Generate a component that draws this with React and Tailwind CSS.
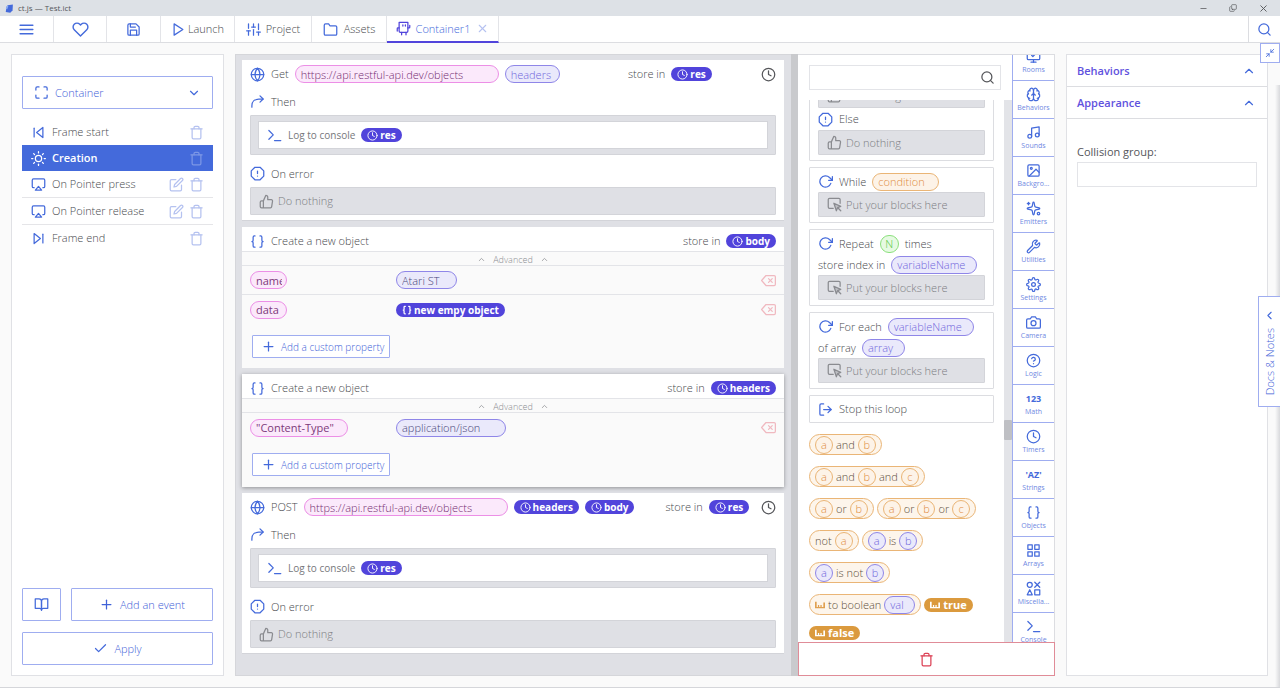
import React from "react";
import {
  FiMenu, FiHeart, FiSave, FiPlay, FiSliders, FiFolder, FiX, FiSearch, FiMaximize, FiChevronDown,
  FiChevronUp, FiChevronLeft, FiSkipBack, FiSkipForward, FiSun, FiAirplay, FiEdit, FiTrash, FiBookOpen,
  FiPlus, FiCheck, FiGlobe, FiClock, FiAlertOctagon, FiThumbsUp, FiDelete, FiRotateCw,
  FiLogOut, FiMusic, FiImage, FiSettings, FiCamera, FiHelpCircle, FiGrid, FiMinimize2, FiMinus,
} from "react-icons/fi";
import { Brain, Sparkles, Wrench, MonitorCheck, Braces, Copy } from "lucide-react";

const BLUE = "text-[#446adb]";

function Svg({ className, children, stroke = 2 }) {
  return (
    <svg viewBox="0 0 24 24" className={className} fill="none" stroke="currentColor" strokeWidth={stroke} strokeLinecap="round" strokeLinejoin="round" aria-hidden="true">
      {children}
    </svg>
  );
}

const ThenIcon = ({ className }) => (
  <Svg className={className}>
    <path d="M3 21v-2C3 12 8 8 14 8h7" />
    <path d="M16 3l5 5-5 5" />
  </Svg>
);

const PromptIcon = ({ className }) => (
  <Svg className={className}>
    <path d="M3 18l7-7-7-7" />
    <path d="M12 20h10" />
  </Svg>
);

const DroidIcon = ({ className }) => (
  <Svg className={className}>
    <path d="M5 2h14v14a2 2 0 0 1-2 2H7a2 2 0 0 1-2-2z" />
    <path d="M11 6v2M15 6v2M9 18v4M16 18v4M5 11H3a1 1 0 0 0-1 1v4M19 11h2a1 1 0 0 0 1-1V7" />
  </Svg>
);

const DropIcon = ({ className }) => (
  <Svg className={className}>
    <path d="M10 18H4a2 2 0 0 1-2-2V4a2 2 0 0 1 2-2h15a2 2 0 0 1 2 2v6" />
    <path d="M11 10l4 12 2-5 5-2z" fill="currentColor" fillOpacity="0.4" />
    <path d="M18 18l4 4" />
  </Svg>
);

const BoolIcon = ({ className }) => (
  <svg viewBox="0 0 24 24" className={className} fill="currentColor" aria-hidden="true">
    <path d="M0 4h4v16H0zM4 17h20v3H4zM7 12h3v6H7zM13 12h3v6h-3zM20 6h4v14h-4z" />
  </svg>
);

const ShapesIcon = ({ className }) => (
  <Svg className={className}>
    <circle cx="6" cy="6" r="4" />
    <path d="M14 2l8 8M22 2l-8 8M6 14l-4 8h8zM14 14h8v8h-8z" />
  </Svg>
);

function EventRow({ icon, label, selected, edit, line }) {
  return (
    <li
      className={
        "flex items-center px-[9px] " +
        (selected ? "h-[26px] bg-[#446adb] font-semibold text-white" : line ? "h-[27px] border-b border-[#e5e5e8]" : "h-[26px]")
      }
    >
      <span className={selected ? "text-white" : BLUE}>{icon}</span>
      <span className="ml-[6px] grow">{label}</span>
      {edit && (
        <button aria-label={"Edit " + label} className="mr-[5px] text-[#b5c2f0]"><FiEdit className="size-[15px]" /></button>
      )}
      <button aria-label={"Delete " + label} className={selected ? "text-[#7c97e6]" : "text-[#b5c2f0]"}>
        <FiTrash className="size-[15px]" />
      </button>
    </li>
  );
}

function Var({ children, braces }) {
  return (
    <span className="flex h-[14px] shrink-0 items-center gap-[2px] rounded-full bg-[#5144db] px-[6px] text-[10px] font-bold whitespace-nowrap text-white">
      {braces ? <Braces className="size-[10px]" strokeWidth={3} /> : <FiClock className="size-[11px]" />}
      {children}
    </span>
  );
}

const tones = {
  pink: "border-[#ec8fe6] bg-[#fbe9fb] text-[#742c70]",
  pinkBold: "border-[#ec8fe6] bg-[#fbe9fb] text-[#7d3a7a] font-medium",
  violet: "border-[#8f86e8] bg-[#eae9fb] text-[#48457a]",
  violetHint: "border-[#8f86e8] bg-[#eae9fb] text-[#7167dc]",
  orange: "border-[#eab576] bg-[#fdf3e8] text-[#e08c40]",
  green: "border-[#8be07c] bg-[#e6fae2] text-[#55c844]",
};

function Field({ tone, value, width, label, center }) {
  return (
    <input
      aria-label={label || value}
      defaultValue={value}
      className={"h-[18px] shrink-0 rounded-full border text-[11px] outline-none " + (center ? "text-center px-0 " : "pl-[5px] pr-1 ") + tones[tone] + " " + width}
    />
  );
}

function Nothing({ height = "h-[28px]" }) {
  return (
    <div className={"flex items-center gap-1 rounded-[1px] border border-[#d3d4d9] bg-[#dfe0e5] px-2 text-[#7c7d82] " + height}>
      <FiThumbsUp className="size-[15px] text-[#8a8b90]" />
      <span>Do nothing</span>
    </div>
  );
}

function RequestBlock({ verb, urlWidth, children }) {
  return (
    <section className="border-b border-[#d3d4d9] bg-white px-2 pb-[5px]">
      <div className="flex h-[28px] items-center gap-[6px]">
        <FiGlobe className={"size-[15px] shrink-0 " + BLUE} />
        <span className="shrink-0">{verb}</span>
        <Field tone="pink" label="Request URL" value="https://api.restful-api.dev/objects" width={urlWidth} />
        {children}
        <span className="ml-[19px] grow" />
        <span className="shrink-0 whitespace-nowrap">store in</span>
        <Var>res</Var>
        <span className="grow" />
        <FiClock className="size-[15px] shrink-0 text-[#55565a]" />
      </div>
      <div className="flex h-[27px] items-center gap-[6px]">
        <ThenIcon className={"size-[15px] " + BLUE} />
        <span>Then</span>
      </div>
      <div className="h-[40px] rounded-[1px] border border-[#d3d4d9] bg-[#dfe0e5] px-[7px] py-[5px]">
        <div className="flex h-[28px] items-center gap-[6px] border border-[#d3d4d9] bg-white px-2">
          <PromptIcon className={"size-[15px] " + BLUE} />
          <span className="text-[10px] font-normal text-[#77787c]">Log to console</span>
          <Var>res</Var>
        </div>
      </div>
      <div className="mt-[5px] flex h-[27px] items-center gap-[6px]">
        <FiAlertOctagon className={"size-[15px] " + BLUE} />
        <span>On error</span>
      </div>
      <Nothing />
    </section>
  );
}

function PropRow({ name, nameWidth, children, line }) {
  return (
    <div className={"flex h-[29px] items-center px-2 " + (line ? "border-b border-[#e3e4e8]" : "")}>
      <div className="flex w-[146px]"><Field tone="pinkBold" label="Property name" value={name} width={nameWidth} /></div>
      <div className="flex grow">{children}</div>
      <button aria-label={"Remove " + name} className="text-[#f0b9c0]"><FiDelete className="size-[15px]" /></button>
    </div>
  );
}

function ObjectBlock({ target, raised, children }) {
  return (
    <section className={"bg-[#fafafa] " + (raised ? "z-10 pb-[11px] shadow-[0_1px_4px_rgba(0,0,0,0.35)]" : "pb-[10px]")}>
      <div className="flex h-[25px] items-center gap-[6px] border-b border-[#e3e4e8] bg-white px-2 pt-1">
        <Braces className={"size-[15px] " + BLUE} />
        <span className="grow">Create a new object</span>
        <span>store in</span>
        <Var>{target}</Var>
      </div>
      <button className="flex h-[14px] w-full items-center justify-center gap-[7px] border-b border-[#e3e4e8] pt-[2px] text-[9px] text-[#8c8d92]">
        <FiChevronUp className="size-[9px]" />
        <span>Advanced</span>
        <FiChevronUp className="size-[9px]" />
      </button>
      {children}
      <button className="mt-[11px] ml-[10px] flex h-[23px] items-center gap-[5px] rounded-[1px] border border-[#9fadf0] bg-white pr-[5px] pl-2 text-[10px] text-[#3f62d8]">
        <FiPlus className={"size-[15px] " + BLUE} />
        Add a custom property
      </button>
    </section>
  );
}

function Drop() {
  return (
    <div className="flex h-[25px] items-center gap-1 rounded-[1px] border border-[#d3d4d9] bg-[#dfe0e5] px-2 text-[#7c7d82]">
      <DropIcon className="size-[15px] text-[#8a8b90]" />
      <span>Put your blocks here</span>
    </div>
  );
}

function Card({ children, className = "" }) {
  return <div className={"mb-[6px] shrink-0 rounded-[1px] border border-[#dcdde1] bg-white px-2 pt-[3px] pb-[5px] " + className}>{children}</div>;
}

function Line({ children }) {
  return <div className="flex h-[21px] items-center gap-[6px] whitespace-nowrap">{children}</div>;
}

function Expr({ children }) {
  return (
    <span className="flex h-[21px] items-center gap-[3px] rounded-full border border-[#eab576] bg-[#fdf5eb] px-[5px] whitespace-nowrap text-[#5d4f40]">
      {children}
    </span>
  );
}

function Slot({ tone = "orange", children, width = "w-[18px]" }) {
  return <Field tone={tone} value={children} width={width} center={width === "w-[18px]"} label={"Operand " + children} />;
}

function BoolPill({ children }) {
  return (
    <span className="flex h-[14px] items-center gap-[3px] rounded-full bg-[#db9a3e] px-[6px] font-bold text-white">
      <BoolIcon className="size-[10px]" />
      {children}
    </span>
  );
}

const Row = ({ children, short }) => <div className={"mt-[11px] flex shrink-0 items-center gap-[3px] " + (short ? "h-[14px]" : "h-[21px]")}>{children}</div>;

const I = "size-[15px]";
const categories = [
  ["Rooms", <MonitorCheck className={I} />],
  ["Behaviors", <Brain className={I} />],
  ["Sounds", <FiMusic className={I} />],
  ["Backgro...", <FiImage className={I} />],
  ["Emitters", <Sparkles className={I + " -scale-x-100"} />],
  ["Utilities", <Wrench className={I} />],
  ["Settings", <FiSettings className={I} />],
  ["Camera", <FiCamera className={I} />],
  ["Logic", <FiHelpCircle className={I} />],
  ["Math", <span className="flex h-[15px] items-center text-[9px] font-bold">123</span>],
  ["Timers", <FiClock className={I} />],
  ["Strings", <span className="flex h-[15px] items-center text-[9px] font-bold">'AZ'</span>],
  ["Objects", <Braces className={I} />],
  ["Arrays", <FiGrid className={I} />],
  ["Miscella...", <ShapesIcon className={I} />],
  ["Console", <PromptIcon className={I} />],
];

const outline = "flex items-center justify-center rounded-[1px] border border-[#9fadf0] bg-white text-[#3f62d8]";

export default function App() {
  return (
    <div className="relative flex h-screen flex-col overflow-hidden border-b border-[#d5d6da] bg-[#fafafa] font-['Open_Sans',sans-serif] text-[11px] leading-[16px] font-light text-[#48494d]">
      <header className="flex h-[16px] shrink-0 items-center bg-[#dde1e6] pr-[11px] pl-[5px] font-normal text-[#55565a]">
        <svg viewBox="0 0 24 24" className="size-[9px]" aria-hidden="true">
          <path d="M7 3l14-2-1 16-6 6-12-2 2-14z" fill="#446adb" />
          <path d="M2 12l4-8 3 1-3 9z" fill="#8fb0f5" />
        </svg>
        <span className="ml-1 grow text-[8px]">ct.js — Test.ict</span>
        <button aria-label="Minimize"><FiMinus className="size-[9px]" /></button>
        <button aria-label="Restore" className="ml-[21px]"><Copy className="size-[8px] -scale-x-100 rotate-180" /></button>
        <button aria-label="Close" className="ml-[21px]"><FiX className="size-[11px]" /></button>
      </header>

      <nav className="flex h-[27px] shrink-0 border-b border-[#dcdde1] bg-white">
        <button aria-label="Menu" className={"flex w-[54px] items-center justify-center border-r border-[#e3e4e8] " + BLUE}><FiMenu className="size-[17px]" /></button>
        <button aria-label="Favourites" className={"flex w-[53px] items-center justify-center border-r border-[#e3e4e8] " + BLUE}><FiHeart className="size-[17px]" /></button>
        <button aria-label="Save" className={"flex w-[54px] items-center justify-center border-r border-[#e3e4e8] " + BLUE}><FiSave className="size-[15px]" /></button>
        <button className="flex w-[74px] items-center justify-center gap-[2px] border-r border-[#e3e4e8]"><FiPlay className={"size-[15px] " + BLUE} />Launch</button>
        <button className="flex w-[77px] items-center justify-center gap-[5px] border-r border-[#e3e4e8]"><FiSliders className={"size-[15px] " + BLUE} />Project</button>
        <button className="flex w-[75px] items-center justify-center gap-[6px] border-r border-[#e3e4e8]"><FiFolder className={"size-[15px] " + BLUE} />Assets</button>
        <div className="mb-[-1px] flex w-[112px] items-center justify-center border-r border-b-2 border-r-[#e3e4e8] border-b-[#5144db] text-[#446adb]">
          <button className="flex items-center gap-[5px]"><DroidIcon className="size-[15px] text-[#5144db]" />Container1</button>
          <button aria-label="Close tab" className="ml-[6px] text-[#b5c2f0]"><FiX className="size-[13px]" /></button>
        </div>
        <button aria-label="Search" className={"ml-auto flex w-[32px] items-center justify-center border-l border-[#dcdde1] " + BLUE}><FiSearch className="size-[15px]" /></button>
      </nav>

      <main className="flex min-h-0 grow gap-[11px] pt-[11px] pr-3 pb-[11px] pl-[11px]">
        <aside className="flex w-[213px] shrink-0 flex-col border border-[#e0e1e5] bg-white px-[10px] pb-[10px]">
          <button className={outline + " mt-[21px] h-[33px] shrink-0 px-[11px]"}>
            <FiMaximize className="size-[15px] text-[#446adb]" />
            <span className="ml-[6px] grow text-left">Container</span>
            <FiChevronDown className="size-[14px] text-[#446adb]" />
          </button>
          <ul className="mt-[10px]">
            <EventRow icon={<FiSkipBack className="size-[15px]" />} label="Frame start" />
            <EventRow icon={<FiSun className="size-[15px]" />} label="Creation" selected />
            <EventRow icon={<FiAirplay className="size-[15px]" />} label="On Pointer press" edit line />
            <EventRow icon={<FiAirplay className="size-[15px]" />} label="On Pointer release" edit line />
            <EventRow icon={<FiSkipForward className="size-[15px]" />} label="Frame end" />
          </ul>
          <div className="mt-auto flex gap-[10px]">
            <button aria-label="Documentation" className={outline + " h-[33px] w-[39px]"}><FiBookOpen className="size-[15px] text-[#446adb]" /></button>
            <button className={outline + " h-[33px] grow gap-[6px]"}><FiPlus className="size-[15px]" />Add an event</button>
          </div>
          <button className={outline + " mt-[11px] h-[33px] shrink-0 gap-[6px]"}><FiCheck className="size-[15px] text-[#446adb]" />Apply</button>
        </aside>

        <div className="flex min-w-0 grow">
          <div className="flex min-w-0 grow flex-col gap-[6px] overflow-hidden border border-r-0 border-[#d5d6da] bg-[#dfe0e5] pt-[5px] pr-[7px] pl-[6px]">
            <RequestBlock verb="Get" urlWidth="w-[204px]">
              <Field tone="violetHint" value="headers" width="w-[55px]" />
            </RequestBlock>
            <ObjectBlock target="body">
              <PropRow name="name" nameWidth="w-[37px]" line>
                <Field tone="violet" label="Value" value="Atari ST" width="w-[61px]" />
              </PropRow>
              <PropRow name="data" nameWidth="w-[37px]">
                <Var braces>new empy object</Var>
              </PropRow>
            </ObjectBlock>
            <ObjectBlock target="headers" raised>
              <PropRow name={'"Content-Type"'} nameWidth="w-[98px]">
                <Field tone="violet" label="Value" value="application/json" width="w-[110px]" />
              </PropRow>
            </ObjectBlock>
            <RequestBlock verb="POST" urlWidth="w-[204px]">
              <Var>headers</Var>
              <Var>body</Var>
            </RequestBlock>
          </div>
          <div className="w-[7px] shrink-0 bg-[#c9cacd]" />

          <div className="flex w-[257px] shrink-0 flex-col">
            <div className="flex min-h-0 grow border-t border-r border-[#dcdde1] bg-white">
              <div className="flex min-w-0 grow flex-col">
                <div className="mt-[10px] mr-[11px] ml-[11px] flex h-[25px] shrink-0 items-center border border-[#e3e4e8] pr-[5px]">
                  <input aria-label="Search blocks" className="min-w-0 grow px-2 outline-none" />
                  <FiSearch className="size-[15px] text-[#55565a]" />
                </div>
                <div className="mt-[10px] flex min-h-0 grow">
                  <div className="flex min-w-0 grow flex-col overflow-hidden pr-[10px] pl-[11px]">
                    <Card className="-mt-[21px]">
                      <Nothing height="h-[25px]" />
                      <div className="flex h-[22px] items-center gap-[6px]"><FiAlertOctagon className={"size-[15px] " + BLUE} />Else</div>
                      <Nothing height="h-[25px]" />
                    </Card>
                    <Card>
                      <Line>
                        <FiRotateCw className={"size-[15px] " + BLUE} />While
                        <Field tone="orange" value="condition" width="w-[67px]" />
                      </Line>
                      <Drop />
                    </Card>
                    <Card>
                      <Line>
                        <FiRotateCw className={"size-[15px] " + BLUE} />Repeat
                        <Field tone="green" value="N" width="w-[19px]" center />times
                      </Line>
                      <Line>store index in<Field tone="violetHint" value="variableName" width="w-[86px]" /></Line>
                      <Drop />
                    </Card>
                    <Card>
                      <Line>
                        <FiRotateCw className={"size-[15px] " + BLUE} />For each
                        <Field tone="violetHint" value="variableName" width="w-[86px]" />
                      </Line>
                      <Line>of array<Field tone="violetHint" value="array" width="w-[43px]" /></Line>
                      <Drop />
                    </Card>
                    <div className="flex h-[28px] shrink-0 items-center gap-[6px] rounded-[1px] border border-[#dcdde1] px-2">
                      <FiLogOut className={"size-[15px] " + BLUE} />Stop this loop
                    </div>
                    <Row><Expr><Slot>a</Slot>and<Slot>b</Slot></Expr></Row>
                    <Row><Expr><Slot>a</Slot>and<Slot>b</Slot>and<Slot>c</Slot></Expr></Row>
                    <Row>
                      <Expr><Slot>a</Slot>or<Slot>b</Slot></Expr>
                      <Expr><Slot>a</Slot>or<Slot>b</Slot>or<Slot>c</Slot></Expr>
                    </Row>
                    <Row>
                      <Expr>not<Slot>a</Slot></Expr>
                      <Expr><Slot tone="violetHint">a</Slot>is<Slot tone="violetHint">b</Slot></Expr>
                    </Row>
                    <Row><Expr><Slot tone="violetHint">a</Slot>is not<Slot tone="violetHint">b</Slot></Expr></Row>
                    <Row>
                      <Expr><BoolIcon className="size-[10px] text-[#e0a050]" />to boolean<Slot tone="violetHint" width="w-[31px]">val</Slot></Expr>
                      <BoolPill>true</BoolPill>
                    </Row>
                    <Row short><BoolPill>false</BoolPill></Row>
                  </div>
                  <div className="w-[8px] shrink-0 bg-[#e3e4e8]">
                    <div className="mt-[320px] h-[20px] rounded-[1px] bg-[#bfc0c4]" />
                  </div>
                </div>
              </div>
              <div className="flex w-[42px] shrink-0 flex-col overflow-hidden border-l border-[#9fadf0]">
                <div className="-mt-[12px] flex flex-col">
                  {categories.map(([name, icon]) => (
                    <button key={name} className="flex h-[38px] shrink-0 flex-col items-center justify-center gap-[1px] border-b border-[#9fadf0] text-[7px] leading-[9px] font-normal text-[#6f88e2]">
                      <span className={BLUE}>{icon}</span>
                      {name}
                    </button>
                  ))}
                </div>
              </div>
            </div>
            <button aria-label="Delete block" className="flex h-[34px] shrink-0 items-center justify-center border border-[#e08c98] bg-white text-[#dc4256]">
              <FiTrash className="size-[15px]" />
            </button>
          </div>
        </div>

        <aside className="w-[202px] shrink-0 border border-[#e0e1e5] bg-white">
          {["Behaviors", "Appearance"].map((title) => (
            <button key={title} className="flex h-[32px] w-full items-center justify-between border-b border-[#dcdde1] pr-[11px] pl-[10px] font-semibold text-[#5f52de]">
              {title}
              <FiChevronUp className="size-[14px] text-[#446adb]" />
            </button>
          ))}
          <label className="mt-[25px] block px-[10px] font-normal text-[#55565a]">
            Collision group:
            <input className="mt-[2px] block h-[25px] w-full border border-[#e3e4e8] px-2 outline-none" />
          </label>
        </aside>
      </main>

      <div className="absolute top-[85px] right-0 bottom-0 w-[5px] bg-linear-to-r from-[#fafafa] to-[#d8d9dc]" />
      <button aria-label="Collapse panel" className="absolute top-[43px] right-0 flex size-[20px] items-center justify-center border border-[#9fadf0] bg-white text-[#446adb]">
        <FiMinimize2 className="size-[10px]" />
      </button>
      <button className="absolute top-[296px] right-0 flex h-[111px] w-[22px] flex-col items-center gap-[6px] rounded-l-[1px] border border-r-0 border-[#9fadf0] bg-white pt-[12px] text-[#3f62d8]">
        <FiChevronLeft className="size-[13px] text-[#446adb]" />
        <span className="rotate-180 [writing-mode:vertical-rl]">Docs &amp; Notes</span>
      </button>
    </div>
  );
}
